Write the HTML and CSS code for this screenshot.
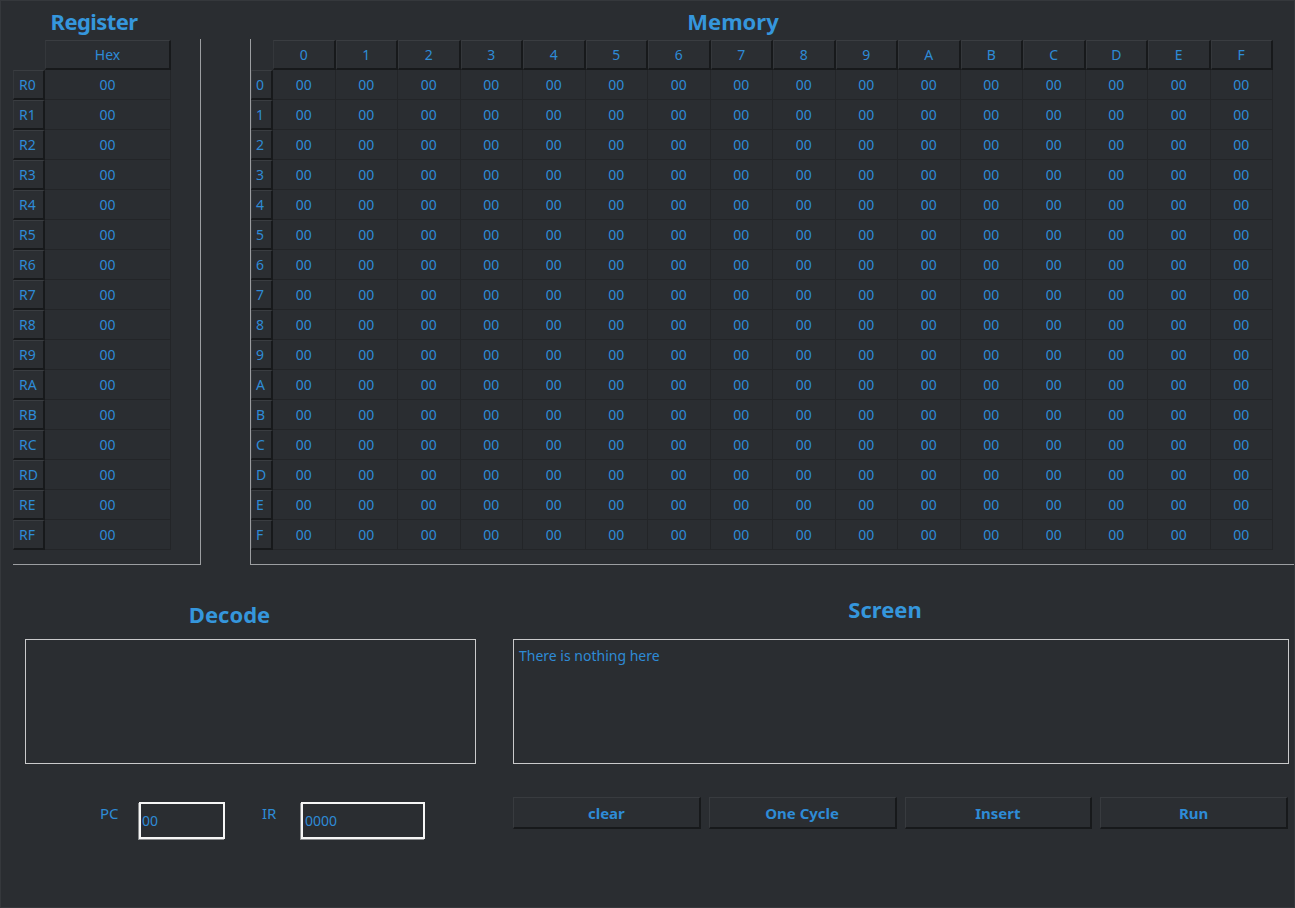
FILE: index.html
```html
<!DOCTYPE html>
<html>
<head>
<meta charset="utf-8">
<title>Simulator</title>
<link rel="stylesheet" href="styles.css">
</head>
<body>
<div class="app">
  <div class="top">
    <div class="reg-col">
      <div class="title reg-title">Register</div>
      <div class="frame reg-frame">
        <div class="grid reg-grid">
          <div class="corner"></div><div class="ch">Hex</div>
          <div class="rh">R0</div><div class="c">00</div>
          <div class="rh">R1</div><div class="c">00</div>
          <div class="rh">R2</div><div class="c">00</div>
          <div class="rh">R3</div><div class="c">00</div>
          <div class="rh">R4</div><div class="c">00</div>
          <div class="rh">R5</div><div class="c">00</div>
          <div class="rh">R6</div><div class="c">00</div>
          <div class="rh">R7</div><div class="c">00</div>
          <div class="rh">R8</div><div class="c">00</div>
          <div class="rh">R9</div><div class="c">00</div>
          <div class="rh">RA</div><div class="c">00</div>
          <div class="rh">RB</div><div class="c">00</div>
          <div class="rh">RC</div><div class="c">00</div>
          <div class="rh">RD</div><div class="c">00</div>
          <div class="rh">RE</div><div class="c">00</div>
          <div class="rh">RF</div><div class="c">00</div>
        </div>
      </div>
    </div>
    <div class="mem-col">
      <div class="title mem-title">Memory</div>
      <div class="frame mem-frame">
        <div class="grid mem-grid">
          <div class="corner"></div>
          <div class="ch">0</div><div class="ch">1</div><div class="ch">2</div><div class="ch">3</div><div class="ch">4</div><div class="ch">5</div><div class="ch">6</div><div class="ch">7</div><div class="ch">8</div><div class="ch">9</div><div class="ch">A</div><div class="ch">B</div><div class="ch">C</div><div class="ch">D</div><div class="ch">E</div><div class="ch">F</div>
          <div class="rh">0</div><div class="c">00</div><div class="c">00</div><div class="c">00</div><div class="c">00</div><div class="c">00</div><div class="c">00</div><div class="c">00</div><div class="c">00</div><div class="c">00</div><div class="c">00</div><div class="c">00</div><div class="c">00</div><div class="c">00</div><div class="c">00</div><div class="c">00</div><div class="c">00</div>
          <div class="rh">1</div><div class="c">00</div><div class="c">00</div><div class="c">00</div><div class="c">00</div><div class="c">00</div><div class="c">00</div><div class="c">00</div><div class="c">00</div><div class="c">00</div><div class="c">00</div><div class="c">00</div><div class="c">00</div><div class="c">00</div><div class="c">00</div><div class="c">00</div><div class="c">00</div>
          <div class="rh">2</div><div class="c">00</div><div class="c">00</div><div class="c">00</div><div class="c">00</div><div class="c">00</div><div class="c">00</div><div class="c">00</div><div class="c">00</div><div class="c">00</div><div class="c">00</div><div class="c">00</div><div class="c">00</div><div class="c">00</div><div class="c">00</div><div class="c">00</div><div class="c">00</div>
          <div class="rh">3</div><div class="c">00</div><div class="c">00</div><div class="c">00</div><div class="c">00</div><div class="c">00</div><div class="c">00</div><div class="c">00</div><div class="c">00</div><div class="c">00</div><div class="c">00</div><div class="c">00</div><div class="c">00</div><div class="c">00</div><div class="c">00</div><div class="c">00</div><div class="c">00</div>
          <div class="rh">4</div><div class="c">00</div><div class="c">00</div><div class="c">00</div><div class="c">00</div><div class="c">00</div><div class="c">00</div><div class="c">00</div><div class="c">00</div><div class="c">00</div><div class="c">00</div><div class="c">00</div><div class="c">00</div><div class="c">00</div><div class="c">00</div><div class="c">00</div><div class="c">00</div>
          <div class="rh">5</div><div class="c">00</div><div class="c">00</div><div class="c">00</div><div class="c">00</div><div class="c">00</div><div class="c">00</div><div class="c">00</div><div class="c">00</div><div class="c">00</div><div class="c">00</div><div class="c">00</div><div class="c">00</div><div class="c">00</div><div class="c">00</div><div class="c">00</div><div class="c">00</div>
          <div class="rh">6</div><div class="c">00</div><div class="c">00</div><div class="c">00</div><div class="c">00</div><div class="c">00</div><div class="c">00</div><div class="c">00</div><div class="c">00</div><div class="c">00</div><div class="c">00</div><div class="c">00</div><div class="c">00</div><div class="c">00</div><div class="c">00</div><div class="c">00</div><div class="c">00</div>
          <div class="rh">7</div><div class="c">00</div><div class="c">00</div><div class="c">00</div><div class="c">00</div><div class="c">00</div><div class="c">00</div><div class="c">00</div><div class="c">00</div><div class="c">00</div><div class="c">00</div><div class="c">00</div><div class="c">00</div><div class="c">00</div><div class="c">00</div><div class="c">00</div><div class="c">00</div>
          <div class="rh">8</div><div class="c">00</div><div class="c">00</div><div class="c">00</div><div class="c">00</div><div class="c">00</div><div class="c">00</div><div class="c">00</div><div class="c">00</div><div class="c">00</div><div class="c">00</div><div class="c">00</div><div class="c">00</div><div class="c">00</div><div class="c">00</div><div class="c">00</div><div class="c">00</div>
          <div class="rh">9</div><div class="c">00</div><div class="c">00</div><div class="c">00</div><div class="c">00</div><div class="c">00</div><div class="c">00</div><div class="c">00</div><div class="c">00</div><div class="c">00</div><div class="c">00</div><div class="c">00</div><div class="c">00</div><div class="c">00</div><div class="c">00</div><div class="c">00</div><div class="c">00</div>
          <div class="rh">A</div><div class="c">00</div><div class="c">00</div><div class="c">00</div><div class="c">00</div><div class="c">00</div><div class="c">00</div><div class="c">00</div><div class="c">00</div><div class="c">00</div><div class="c">00</div><div class="c">00</div><div class="c">00</div><div class="c">00</div><div class="c">00</div><div class="c">00</div><div class="c">00</div>
          <div class="rh">B</div><div class="c">00</div><div class="c">00</div><div class="c">00</div><div class="c">00</div><div class="c">00</div><div class="c">00</div><div class="c">00</div><div class="c">00</div><div class="c">00</div><div class="c">00</div><div class="c">00</div><div class="c">00</div><div class="c">00</div><div class="c">00</div><div class="c">00</div><div class="c">00</div>
          <div class="rh">C</div><div class="c">00</div><div class="c">00</div><div class="c">00</div><div class="c">00</div><div class="c">00</div><div class="c">00</div><div class="c">00</div><div class="c">00</div><div class="c">00</div><div class="c">00</div><div class="c">00</div><div class="c">00</div><div class="c">00</div><div class="c">00</div><div class="c">00</div><div class="c">00</div>
          <div class="rh">D</div><div class="c">00</div><div class="c">00</div><div class="c">00</div><div class="c">00</div><div class="c">00</div><div class="c">00</div><div class="c">00</div><div class="c">00</div><div class="c">00</div><div class="c">00</div><div class="c">00</div><div class="c">00</div><div class="c">00</div><div class="c">00</div><div class="c">00</div><div class="c">00</div>
          <div class="rh">E</div><div class="c">00</div><div class="c">00</div><div class="c">00</div><div class="c">00</div><div class="c">00</div><div class="c">00</div><div class="c">00</div><div class="c">00</div><div class="c">00</div><div class="c">00</div><div class="c">00</div><div class="c">00</div><div class="c">00</div><div class="c">00</div><div class="c">00</div><div class="c">00</div>
          <div class="rh">F</div><div class="c">00</div><div class="c">00</div><div class="c">00</div><div class="c">00</div><div class="c">00</div><div class="c">00</div><div class="c">00</div><div class="c">00</div><div class="c">00</div><div class="c">00</div><div class="c">00</div><div class="c">00</div><div class="c">00</div><div class="c">00</div><div class="c">00</div><div class="c">00</div>
        </div>
      </div>
    </div>
  </div>
  <div class="bottom">
    <div class="left-col">
      <div class="title decode-title">Decode</div>
      <div class="box decode-box"></div>
      <div class="regs">
        <div class="lbl pc-lbl">PC</div>
        <div class="field pc-field">00</div>
        <div class="lbl ir-lbl">IR</div>
        <div class="field ir-field">0000</div>
      </div>
    </div>
    <div class="right-col">
      <div class="title screen-title">Screen</div>
      <div class="box screen-box">There is nothing here</div>
      <div class="buttons">
        <div class="btn">clear</div>
        <div class="btn">One Cycle</div>
        <div class="btn">Insert</div>
        <div class="btn">Run</div>
      </div>
    </div>
  </div>
</div>
</body>
</html>
```
FILE: styles.css
```css
html, body {
  margin: 0;
  padding: 0;
  background: #2a2d31;
}
body {
  font-family: "Noto Sans", "Open Sans", sans-serif;
  color: #2e8bd6;
  font-size: 14px;
}
.app {
  width: 1295px;
  height: 908px;
  box-sizing: border-box;
  border: 1px solid #35383c;
  background: #2a2d31;
  overflow: hidden;
}
.title {
  font-weight: bold;
  font-size: 22px;
  color: #3596dc;
  text-align: center;
}
.top {
  display: flex;
  height: 564px;
}
.reg-col {
  margin-left: 12px;
  width: 188px;
}
.reg-title {
  height: 38px;
  line-height: 40px;
  padding-right: 26px;
  letter-spacing: -0.6px;
}
.frame {
  box-sizing: border-box;
  height: 526px;
  border-color: #9c9ea1;
  border-style: solid;
  border-width: 0;
  padding-top: 1px;
}
.reg-frame {
  border-right-width: 1px;
  border-bottom-width: 1px;
}
.mem-col {
  margin-left: 49px;
  width: 1044px;
}
.mem-title {
  height: 38px;
  line-height: 40px;
  padding-right: 78px;
}
.mem-frame {
  border-left-width: 1px;
  border-bottom-width: 1px;
}
.grid {
  display: grid;
  grid-auto-rows: 30px;
}
.reg-grid {
  grid-template-columns: 32px 126px;
}
.mem-grid {
  grid-template-columns: 22px repeat(16, 62.5px);
}
.ch, .rh {
  box-sizing: border-box;
  background: #2b2e32;
  border-top: 1px solid #3a3d41;
  border-left: 1px solid #34373b;
  border-right: 2px solid #17191b;
  border-bottom: 2px solid #17191b;
  display: flex;
  align-items: center;
}
.ch {
  justify-content: center;
}
.rh {
  padding-left: 5px;
}
.mem-grid .rh {
  padding-left: 4px;
}
.c {
  box-sizing: border-box;
  border-right: 1px solid #232528;
  border-bottom: 1px solid #232528;
  display: flex;
  align-items: center;
  justify-content: center;
}
.bottom {
  display: flex;
  height: 341px;
}
.left-col {
  margin-left: 24px;
  width: 451px;
}
.decode-title {
  padding-top: 34px;
  line-height: 30px;
  height: 30px;
  margin-bottom: 10px;
  padding-right: 42px;
}
.box {
  box-sizing: border-box;
  height: 125px;
  border: 1px solid #c9cacb;
}
.regs {
  display: flex;
  align-items: flex-start;
  margin-top: 38px;
}
.lbl {
  font-size: 15px;
  line-height: 20px;
  margin-top: 1px;
}
.pc-lbl {
  margin-left: 75px;
  width: 39px;
}
.ir-lbl {
  margin-left: 37px;
  width: 39px;
}
.field {
  box-sizing: border-box;
  height: 37px;
  border: 2px solid #f5f5f5;
  box-shadow: -1px 1px 0 #8a8c8e;
  line-height: 33px;
  padding-left: 1px;
  font-size: 14px;
}
.pc-field {
  width: 86px;
}
.ir-field {
  width: 124px;
  padding-left: 2px;
}
.right-col {
  margin-left: 37px;
  width: 776px;
}
.screen-title {
  padding-top: 29px;
  line-height: 30px;
  height: 30px;
  margin-bottom: 15px;
  padding-right: 32px;
}
.screen-box {
  padding: 6px 5px;
  line-height: 20px;
  font-size: 14px;
}
.buttons {
  display: flex;
  gap: 8px;
  width: 775px;
  margin-top: 33px;
}
.btn {
  flex: 1;
  box-sizing: border-box;
  height: 32px;
  background: #2b2e32;
  border-top: 1px solid #383b3f;
  border-left: 1px solid #383b3f;
  border-right: 2px solid #17191b;
  border-bottom: 2px solid #17191b;
  display: flex;
  align-items: center;
  justify-content: center;
  font-weight: bold;
  font-size: 15px;
  color: #2e8bd6;
}
```
